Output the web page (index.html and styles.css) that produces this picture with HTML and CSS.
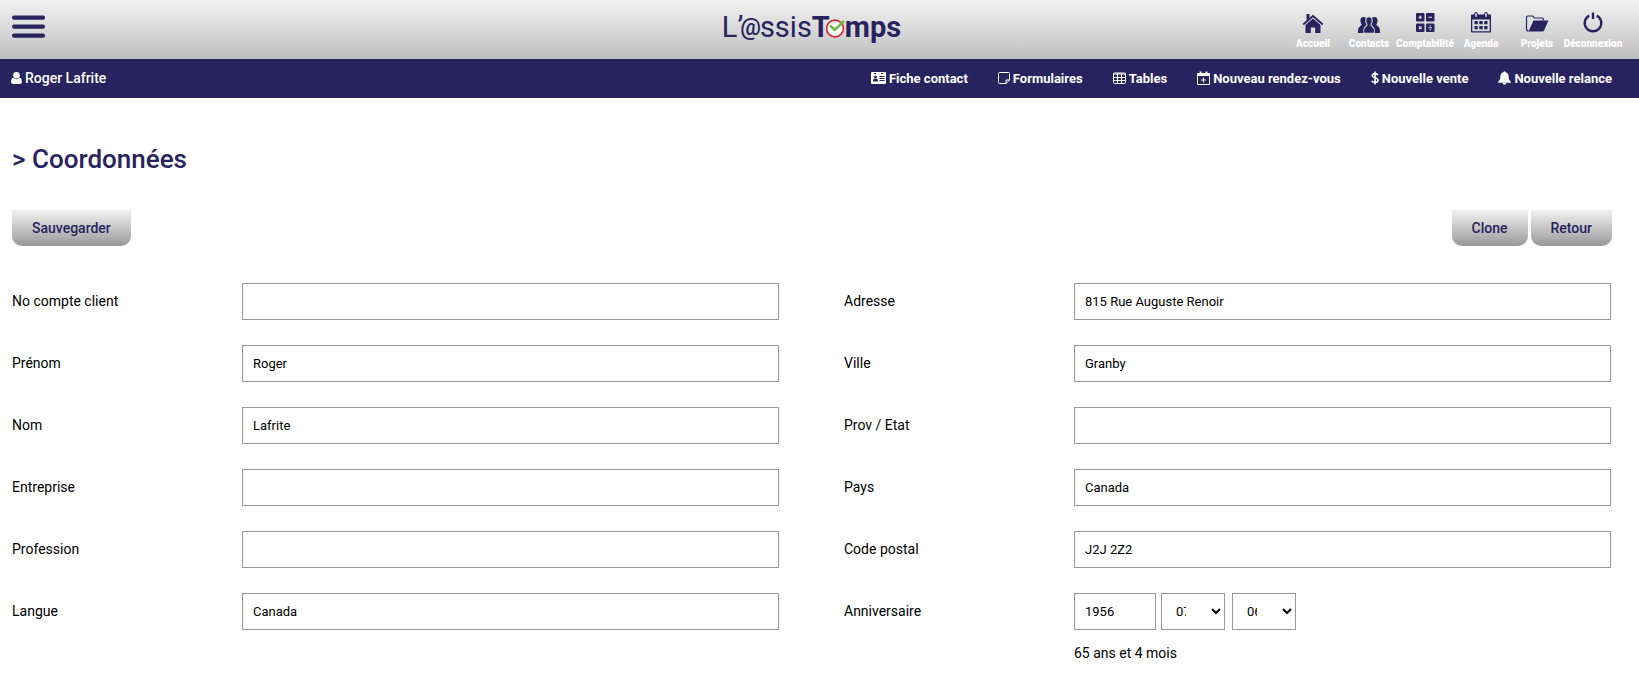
FILE: index.html
```html
<!DOCTYPE html>
<html lang="fr">
<head>
<meta charset="utf-8">
<title>L'@ssisTemps - Coordonnées</title>
<link rel="stylesheet" href="styles.css">
</head>
<body>
<header class="topbar">
  <button class="menu-toggle" type="button" aria-label="Menu">
    <svg width="33" height="24" viewBox="0 0 33 24"><rect y="0.500" width="33" height="4.200" rx="2"/><rect y="9.500" width="33" height="4.200" rx="2"/><rect y="18.500" width="33" height="4.200" rx="2"/></svg>
  </button>
  <a class="logo" href="#"><span class="logo-light">L’</span><span class="logo-at">@</span><span class="logo-light">ssis</span><span class="logo-bold">T</span><svg class="logo-clock" width="20" height="20" viewBox="0 0 20 20" aria-hidden="true"><circle cx="9" cy="10.500" r="8.400" fill="#fff" stroke="#e0262b" stroke-width="1.600"/><path d="M4 7.500L8.800 12L18 3" fill="none" stroke="#6cbd45" stroke-width="2.600"/></svg><span class="logo-bold">mps</span></a>
  <nav class="shortcuts">
    <a href="#"><svg width="22" height="22" viewBox="0 0 22 22"><path d="M11 6.500L3.500 13v8h5.300v-5.500h4.400V21h5.300v-8z"/><path d="M1.200 12.500L11 4L20.800 12.500" fill="none" stroke="#28235f" stroke-width="1.800"/><path d="M4.500 2h3v4l-3 2.600z"/></svg>Accueil</a>
    <a href="#"><svg width="24" height="22" viewBox="0 0 24 22"><path d="M6.500 5c1 0 2 .4 2.300 1-.8 2.400-.5 4.800.7 6.400-.2 1.300-2.500 2.100-3 4.600L6 21H1c0-4.500.5-5.500 2.800-7.200 1-.8.800-1.600.3-2.400C2.600 8.600 3.500 5 6.500 5z"/><path d="M17.500 5c-1 0-2 .4-2.300 1 .8 2.400.5 4.800-.7 6.400.2 1.300 2.500 2.100 3 4.600l.5 4h5c0-4.500-.5-5.500-2.800-7.200-1-.8-.8-1.600-.3-2.400C21.400 8.600 20.500 5 17.500 5z"/><path d="M12 5c3 0 3.700 3.700 2 7-.4 1-.2 1.700.6 2.400C16.700 16 17.500 17 17.500 21h-11c0-4 .8-5 2.900-6.600.8-.7 1-1.400.6-2.400C8.300 8.700 9 5 12 5z" stroke="#d4d4d4" stroke-width=".6"/></svg>Contacts</a>
    <a href="#"><svg width="20" height="22" viewBox="0 0 20 22"><rect x="1" y="1" width="8.500" height="8.500" rx="1"/><rect x="11" y="1" width="8.500" height="8.500" rx="1"/><rect x="1" y="11.500" width="8.500" height="8.500" rx="1"/><rect x="11" y="11.500" width="8.500" height="8.500" rx="1"/><path d="M5.200 3.500v3.600M3.400 5.300h3.600M13.400 5.300H17M4 14.500l2.500 2.500M6.500 14.500L4 17M13.400 15.700H17M15.200 13.300v1.200M15.200 17v1.200" fill="none" stroke="#e4e4e4" stroke-width="1.100"/></svg>Comptabilité</a>
    <a href="#"><svg width="22" height="22" viewBox="0 0 22 22"><path fill-rule="evenodd" d="M2 2.500h18a1 1 0 0 1 1 1v16a1 1 0 0 1-1 1H2a1 1 0 0 1-1-1v-16a1 1 0 0 1 1-1zM2.300 7.500v11.700h17.400V7.500z"/><path d="M6 1.800v2.500M16 1.800v2.500" stroke="#28235f" stroke-width="3.600" stroke-linecap="round"/><path d="M6 1.800v2.500M16 1.800v2.500" stroke="#dcdcdc" stroke-width="1.600" stroke-linecap="round"/><path d="M4.500 9h3.300v3.300H4.500zM9.300 9h3.400v3.300H9.300zM14.200 9h3.300v3.300h-3.300zM4.500 14h3.300v3.300H4.500zM9.300 14h3.400v3.300H9.300zM14.200 14h3.300v3.300h-3.300z"/></svg>Agenda</a>
    <a href="#"><svg width="24" height="22" viewBox="0 0 24 22"><path d="M3.500 19C2 19 1.500 18.500 1.500 17V5.500c0-1 .4-1.500 1.500-1.500h4.500l2 2h7.700c1 0 1.300.5 1.300 2.500" fill="none" stroke="#28235f" stroke-width="1.200"/><path d="M8.500 8.500h15L19 18.700c-.3.600-.6.800-1.200.8H3.500z"/></svg>Projets</a>
    <a href="#"><svg width="22" height="22" viewBox="0 0 22 22"><path d="M7.200 3.600a8.300 8.300 0 1 0 7.600 0" fill="none" stroke="#28235f" stroke-width="2.400"/><path d="M11 .5v6.500" stroke="#28235f" stroke-width="2.400"/></svg>Déconnexion</a>
  </nav>
</header>

<div class="userbar">
  <a class="user" href="#"><svg width="11" height="14" viewBox="0 0 11 14"><circle cx="5.500" cy="4.200" r="3.300"/><path d="M2.200 6.500C.6 7 .1 9 .1 10.800.1 12.300 1 13 2.300 13h6.400c1.300 0 2.200-.7 2.200-2.200C10.900 9 10.400 7 8.800 6.500 8 7.700 6.900 8.200 5.500 8.200S3 7.700 2.200 6.500z"/></svg>Roger Lafrite</a>
  <nav class="actions">
    <a href="#"><svg width="15" height="14" viewBox="0 0 15 14"><rect y="1" width="15" height="12" rx="1"/><g fill="#28235f"><rect x="3" y="2" width="2" height="1"/><rect x="10" y="2" width="2" height="1"/><circle cx="4.500" cy="6" r="1.500"/><path d="M2 10.500c0-1.800.5-2.500 1.200-2.700h2.600c.7.200 1.200.9 1.200 2.700z"/><rect x="8.500" y="5" width="5" height="1"/><rect x="8.500" y="7" width="5" height="1"/><rect x="8.500" y="9" width="5" height="1"/></g></svg>Fiche contact</a>
    <a href="#"><svg width="12" height="14" viewBox="0 0 12 14"><path d="M8 12.500H1.500a1 1 0 0 1-1-1v-9a1 1 0 0 1 1-1h9a1 1 0 0 1 1 1V9L8 12.500zV9h3.500" fill="none" stroke="#fff"/></svg>Formulaires</a>
    <a href="#"><svg width="13" height="14" viewBox="0 0 13 14"><path d="M1.500 2h10a1 1 0 0 1 1 1v8.500a1 1 0 0 1-1 1h-10a1 1 0 0 1-1-1V3a1 1 0 0 1 1-1zM.5 3h12M.5 6.500h12M.5 9.500h12M4.500 3v9.500M8.500 3v9.500" fill="none" stroke="#fff"/></svg>Tables</a>
    <a href="#"><svg width="13" height="14" viewBox="0 0 13 14"><path d="M.5 2.500h12v11H.5zM.5 4.500h12M6.500 6.500v5M4 9h5" fill="none" stroke="#fff"/><path d="M1 3h11v1.500H1z"/><path d="M3.500.5v3M9.500.5v3" stroke="#fff" stroke-width="2"/></svg>Nouveau rendez-vous</a>
    <a href="#"><svg width="8" height="14" viewBox="0 0 8 14"><path d="M7 4C6.300 3 5.300 2.600 4 2.600 2.300 2.600 1.300 3.400 1.300 4.600 1.300 7.400 7 6 7 9.300c0 1.400-1.200 2.200-3 2.200-1.500 0-2.600-.6-3.300-1.600M4 .5v13" fill="none" stroke="#fff" stroke-width="1.600"/></svg>Nouvelle vente</a>
    <a href="#"><svg width="13" height="14" viewBox="0 0 13 14"><path d="M6.500.3c.6 0 .9.400.9.900 2.300.4 3.200 2 3.200 4 0 3 .9 4.400 2.400 5.600 0 .7-.4 1-1 1H1c-.6 0-1-.3-1-1C1.500 9.600 2.400 8.200 2.400 5.200c0-2 .9-3.600 3.200-4 0-.5.300-.9.900-.9zM4.700 12h3.600c0 1-.8 1.700-1.800 1.700S4.700 13 4.700 12z"/></svg>Nouvelle relance</a>
  </nav>
</div>

<main class="content">
  <h1>&gt; Coordonnées</h1>
  <form>
    <div class="toolbar">
      <button class="btn" type="button">Sauvegarder</button>
      <div class="toolbar-right">
        <button class="btn" type="button">Clone</button>
        <button class="btn" type="button">Retour</button>
      </div>
    </div>
    <div class="columns">
      <div class="fields">
        <div class="field"><label for="compte">No compte client</label><input id="compte" type="text"></div>
        <div class="field"><label for="prenom">Prénom</label><input id="prenom" type="text" value="Roger"></div>
        <div class="field"><label for="nom">Nom</label><input id="nom" type="text" value="Lafrite"></div>
        <div class="field"><label for="entreprise">Entreprise</label><input id="entreprise" type="text"></div>
        <div class="field"><label for="profession">Profession</label><input id="profession" type="text"></div>
        <div class="field"><label for="langue">Langue</label><input id="langue" type="text" value="Canada"></div>
      </div>
      <div class="fields">
        <div class="field"><label for="adresse">Adresse</label><input id="adresse" type="text" value="815 Rue Auguste Renoir"></div>
        <div class="field"><label for="ville">Ville</label><input id="ville" type="text" value="Granby"></div>
        <div class="field"><label for="prov">Prov / Etat</label><input id="prov" type="text"></div>
        <div class="field"><label for="pays">Pays</label><input id="pays" type="text" value="Canada"></div>
        <div class="field"><label for="postal">Code postal</label><input id="postal" type="text" value="J2J 2Z2"></div>
        <div class="field">
          <label for="annee">Anniversaire</label>
          <div class="birthday">
            <input class="year" id="annee" type="text" value="1956">
            <select class="month" aria-label="Mois"><option>07</option></select>
            <select aria-label="Jour"><option>06</option></select>
          </div>
          <p class="age">65 ans et 4 mois</p>
        </div>
      </div>
    </div>
  </form>
</main>
</body>
</html>
```

FILE: styles.css
```css
* {
  box-sizing: border-box;
}

body {
  margin: 0;
  background: #fff;
  color: #000;
  font-family: Roboto, "Liberation Sans", sans-serif;
  font-size: 14px;
}

a {
  color: inherit;
  text-decoration: none;
}

svg {
  flex: none;
  fill: currentColor;
}

.topbar {
  display: grid;
  grid-template-columns: 1fr auto 1fr;
  align-items: center;
  height: 59px;
  padding: 0 28px 0 12px;
  background: linear-gradient(#f2f2f2, #bfbfbf);
  color: #28235f;
}

.menu-toggle {
  justify-self: start;
  display: flex;
  padding: 0 0 5px;
  border: 0;
  background: none;
  color: inherit;
}

.logo {
  display: flex;
  align-items: center;
  padding-bottom: 6px;
  font-size: 29px;
  line-height: 36px;
}

.logo-light {
  font-weight: 400;
}

.logo-at {
  margin: 0 -1px 0 -3px;
  padding-top: 2px;
  font-size: 23px;
  font-weight: 500;
}

.logo-bold {
  font-weight: 700;
}

.logo-clock {
  margin: 3px -1px 0 -4px;
}

.shortcuts {
  justify-self: end;
  display: grid;
  grid-template-columns: repeat(6, 56px);
  margin-right: -10px;
  padding-top: 2px;
}

.shortcuts a {
  display: flex;
  flex-direction: column;
  align-items: center;
  gap: 4px;
  color: #fff;
  font-size: 10px;
  font-weight: 900;
  line-height: 12px;
  white-space: nowrap;
}

.shortcuts svg {
  fill: #28235f;
}

.userbar {
  display: flex;
  align-items: center;
  justify-content: space-between;
  height: 39px;
  padding: 0 27px 1px 11px;
  background: #28235f;
  color: #fff;
}

.user,
.actions a {
  display: flex;
  align-items: center;
  gap: 3px;
}

.user {
  font-weight: 500;
}

.actions {
  display: flex;
  gap: 30px;
  font-size: 13px;
  font-weight: 700;
}

.content {
  padding: 44px 27px 16px 12px;
}

h1 {
  margin: 0;
  color: #28235f;
  font-size: 26px;
  font-weight: 500;
  line-height: 34px;
}

.toolbar {
  display: flex;
  align-items: center;
  justify-content: space-between;
  margin-top: 34px;
}

.toolbar-right {
  display: flex;
  gap: 3px;
}

.btn {
  height: 36px;
  padding: 0 20px;
  border: 0;
  border-radius: 0 0 10px 10px;
  background: linear-gradient(#f2f2f2, #999);
  color: #28235f;
  font: 500 14px Roboto, "Liberation Sans", sans-serif;
}

.columns {
  display: grid;
  grid-template-columns: 1fr 1fr;
  gap: 65px;
  margin-top: 37px;
  padding-right: 1px;
}

.fields {
  display: flex;
  flex-direction: column;
  gap: 25px;
}

.field {
  display: grid;
  grid-template-columns: 230px 1fr;
  align-items: center;
}

.field label {
  padding-bottom: 1px;
}

input,
select {
  width: 100%;
  height: 37px;
  padding: 0 10px;
  border: 1px solid #999;
  border-radius: 0;
  background: #fff;
  color: #000;
  font: 13px Roboto, "Liberation Sans", sans-serif;
}

.birthday {
  display: flex;
}

.birthday .year {
  width: 82px;
}

.birthday select {
  width: 64px;
  margin-left: 7px;
  padding-right: 22px;
}

.birthday .month {
  margin-left: 5px;
}

.age {
  grid-column: 2;
  margin: 15px 0 0;
  line-height: 16px;
}
```
